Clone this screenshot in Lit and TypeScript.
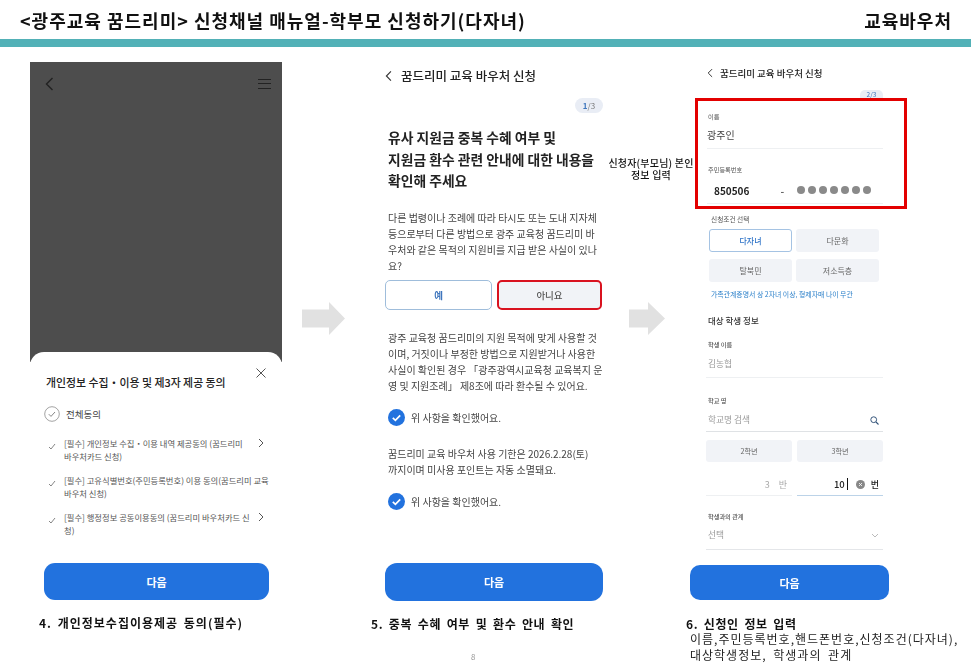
import { LitElement, html, css } from "lit";
import { customElement } from "lit/decorators.js";

const back = (w: number, h: number) => html`<svg class="ico" width=${w} height=${h} viewBox="0 0 10 16"><path d="M8.5 1.5 2 8l6.5 6.5" fill="none" stroke="#333" stroke-width="1.6"/></svg>`;
const right = html`<svg class="ico chev" width="6" height="10" viewBox="0 0 6 10"><path d="M1 1l4 4-4 4" fill="none" stroke="#555" stroke-width="1"/></svg>`;
const tick = html`<svg class="ico tick" width="8" height="7" viewBox="0 0 8 7"><path d="M1 4l2 2 4-5" fill="none" stroke="#777" stroke-width=".9"/></svg>`;
const blueCheck = html`<svg class="ico" width="17" height="17" viewBox="0 0 17 17"><circle cx="8.5" cy="8.5" r="8.5" fill="#2272de"/><path d="M4.8 8.8l2.6 2.5 4.8-5" fill="none" stroke="#fff" stroke-width="1.7"/></svg>`;
const arrow = (shaftEnd: number, w: number) => html`<svg class="arrow" width=${w} height="33" viewBox="0 0 ${w} 33"><path d="M0 7.500H${shaftEnd}V0L${w} 16.500 ${shaftEnd} 33V25.500H0Z" fill="#e1e1e1"/></svg>`;

@customElement("app-root")
export class AppRoot extends LitElement {
  static styles = css`
    :host { display: block; width: 971px; height: 670px; overflow: hidden; background: #fff; color: #222;
      font-family: "Noto Sans CJK KR", "Noto Sans", sans-serif; }
    * { box-sizing: border-box; }
    .ico { display: block; flex: none; }
    .head { height: 39px; padding: 0 19px 0 20px; display: flex; justify-content: space-between; align-items: center;
      font-size: 18px; letter-spacing: 1px; font-weight: 700; color: #111; line-height: 24px; white-space: nowrap; filter: blur(.3px); }
    .band { height: 8px; background: #52b1b7; }
    .slide { position: relative; display: flex; align-items: flex-start; padding: 15px 0 0 30px; filter: blur(.35px); }
    .col { display: flex; flex-direction: column; flex: none; }
    .c1 { width: 252px; }
    .c2 { width: 235px; margin-left: 26px; padding-left: 14px; }
    .c3 { width: 285px; margin-left: 21px; }
    .arrow { display: block; flex: none; margin-top: 240px; }
    .a1 { margin-left: 20px; }
    .a2 { margin-left: 23px; }
    .cap { font-size: 12px; font-weight: 700; line-height: 18px; color: #111; white-space: nowrap; letter-spacing: .55px; word-spacing: 2.5px; }
    .btn { background: #2272de; color: #fff; font-size: 11px; font-weight: 700; display: flex; align-items: center; justify-content: center; }

    /* panel 1 */
    .dim { height: 300px; background: #4d4d4d; display: flex; justify-content: space-between; align-items: flex-start; padding: 15px 11px 0 15px; margin-bottom: -10px; }
    .burger { width: 13px; height: 10px; margin-top: 2px; border-top: 1.500px solid #222; border-bottom: 1.500px solid #222; position: relative; }
    .burger::after { content: ""; position: absolute; left: 0; right: 0; top: 2.500px; height: 1.500px; background: #222; }
    .sheet { position: relative; height: 248px; background: #fff; border-radius: 14px 14px 0 0; padding: 22px 0 0 14px; }
    .s-title { font-size: 10.900px; font-weight: 500; line-height: 16px; margin-left: 2px; white-space: nowrap; color: #222; }
    .close { position: absolute; top: 16px; left: 226px; }
    .all { display: flex; align-items: center; gap: 6px; margin-top: 16px; font-size: 9.500px; color: #444; line-height: 16px; }
    .ring { width: 16px; height: 16px; }
    .items { margin-top: 15px; display: flex; flex-direction: column; gap: 11px; }
    .item { position: relative; font-size: 8.300px; line-height: 13px; color: #555; padding-left: 20px; width: 212px; height: 26px; }
    .item .tick { position: absolute; left: 4px; top: 6px; }
    .item .chev { position: absolute; left: 214px; top: 1px; }
    .t { display: block; white-space: nowrap; }
    .go1 { width: 225px; height: 37px; border-radius: 11px; margin: 26px 0 0 0; }
    .c1 .cap { margin: 14px 0 0 9px; letter-spacing: 1px; word-spacing: 2px; }

    /* panel 2 */
    .bar { display: flex; align-items: center; gap: 9px; font-size: 12.500px; font-weight: 500; line-height: 18px; height: 27px; margin-top: 0; }
    .badge { background: #e9edf5; color: #777; border-radius: 8px; font-size: 8px; line-height: 15px; width: 28px; text-align: center; margin: 9px 0 0 auto; }
    .badge b { color: #3f76bd; }
    .p2 { width: 218px; }
    .h { font-size: 13.800px; font-weight: 700; line-height: 21.500px; margin: 14px 0 0 3px; color: #222; white-space: nowrap; }
    .para { font-size: 10px; line-height: 16px; color: #444; margin: 18px 0 0 3px; white-space: nowrap; }
    .yn { display: flex; gap: 5px; margin-top: 6.500px; }
    .yes, .no { display: flex; align-items: center; justify-content: center; height: 30px; font-size: 9.500px; border-radius: 5px; font-weight: 500; }
    .yes { width: 107px; border: 1.500px solid #9fbddb; color: #3f76bd; background: #fff; font-weight: 700; }
    .no { width: 105px; border: 2px solid #d9121f; background: #f1f3f7; color: #555; }
    .ok { display: flex; align-items: center; gap: 6px; margin: 15px 0 0 3px; font-size: 10px; line-height: 17px; color: #444; }
    .mid { margin-top: 20px; }
    .last { margin-top: 20px; }
    .go2 { width: 218px; height: 38px; border-radius: 12px; margin-top: 53px; }
    .c2 .cap { margin: 14px 0 0 -14px; }
    .page { font-size: 8px; line-height: 12px; color: #999; margin: 18px 0 0 86px; }

    /* panel 3 */
    .c3 .bar { margin-left: 21px; font-size: 9.500px; height: 22px; gap: 7px; }
    .badge3 { margin: 6px 0 0 174px; width: 23px; height: 8px; background: #e9edf5; color: #3f76bd; font-size: 6.500px; line-height: 8px; text-align: center; border-radius: 5px 5px 0 0; }
    .redbox { margin: 0 0 0 9px; width: 212px; height: 111px; border: 3px solid #e30000; padding: 11px 21px 0 9px; background: #fff; }
    .lbl { font-size: 6.200px; line-height: 10px; color: #555; margin-left: 1px; white-space: nowrap; }
    .val { font-size: 10px; line-height: 16px; color: #444; margin-top: 5px; }
    .rule { height: 1px; background: #eef0f2; }
    .r1 { margin-top: 5px; }
    .l2 { margin-top: 16px; }
    .rrn { display: flex; align-items: center; height: 20px; margin: 5px 0 0 0; font-size: 10px; font-weight: 700; color: #222; padding-left: 7px; }
    .dash { margin-left: 31px; width: 5px; text-align: left; color: #666; }
    .dots { display: flex; gap: 3px; margin-left: 12px; }
    .dots i { width: 8px; height: 8px; border-radius: 50%; background: #8a8a8a; }
    .r2 { margin-top: 3px; }
    .sec { padding-left: 25px; }
    .cond { font-size: 6.700px; line-height: 10px; color: #555; margin: 5px 0 0 0; }
    .opts { display: grid; grid-template-columns: 83px 83px; gap: 7px 4px; margin: 5px 0 0 -2px; }
    .opt { height: 23px; display: flex; align-items: center; justify-content: center; border-radius: 3px; background: #f1f3f7; color: #666; font-size: 8px; }
    .opt.on { background: #fff; border: 1px solid #a5c3e3; color: #2f74c8; font-weight: 500; }
    .note { font-size: 6.900px; line-height: 10px; color: #2a7fc9; margin-top: 7px; white-space: nowrap; }
    .wrap { padding-left: 20px; width: 197px; }
    .sub { font-size: 8.500px; font-weight: 500; line-height: 12px; margin: 15px 0 0 2px; color: #333; }
    .wrap .lbl { margin-left: 2px; font-weight: 500; }
    .ph { font-size: 8.700px; line-height: 14px; color: #999; margin: 7px 0 0 2px; display: flex; justify-content: space-between; align-items: center; padding-right: 4px; }
    .wrap .l-name { margin-top: 14px; }
    .wrap .l-school { margin-top: 18px; }
    .wrap .l-rel { margin-top: 16px; }
    .ph.tight { margin-top: 6px; }
    .wrap .r3 { margin-top: 6px; }
    .wrap .r4 { margin-top: 4px; background: #dfe2e5; }
    .wrap .r5 { margin-top: 7px; background: #e4e6e9; }
    .grades { display: grid; grid-template-columns: 86px 86px; gap: 5px; margin-top: 8px; }
    .grades div { height: 22px; background: #f1f3f7; border-radius: 3px; display: flex; align-items: center; justify-content: center; font-size: 7.200px; color: #666; }
    .nums { display: grid; grid-template-columns: 86px 86px; gap: 5px; margin-top: 11px; }
    .num { height: 23px; display: flex; align-items: center; justify-content: flex-end; font-size: 9px; border-bottom: 1px solid #eef0f2; color: #aaa; gap: 9px; padding-right: 5px; }
    .num.act { border-bottom-color: #bcd3e8; color: #222; gap: 0; padding-right: 4px; font-weight: 500; }
    .num.act .n { font-size: 9.500px; }
    .caret { width: 1px; height: 12px; background: #111; margin: 0 8px 0 2px; }
    .x { width: 9px; height: 9px; margin-right: 6px; }
    .go3 { width: 199px; height: 35px; margin: 15px 0 0 4px; border-radius: 10px; }
    .c3 .cap { margin-top: 16px; line-height: 15px; }
    .desc { font-size: 12px; line-height: 16px; margin-left: 4px; color: #222; white-space: nowrap; letter-spacing: 1px; word-spacing: 3px; }

    .note-box { position: absolute; left: 600px; top: 110px; width: 102px; text-align: center; font-size: 10px; letter-spacing: .2px; font-weight: 500; line-height: 12px; color: #111; white-space: nowrap; }
  `;

  render() {
    return html`
      <div class="head"><span>&lt;광주교육 꿈드리미&gt; 신청채널 매뉴얼-학부모 신청하기(다자녀)</span><span>교육바우처</span></div>
      <div class="band"></div>
      <div class="slide">
        <div class="col c1">
          <div class="dim">
            <svg class="ico" width="9" height="14" viewBox="0 0 9 14"><path d="M7.500 1 1.500 7l6 6" fill="none" stroke="#222" stroke-width="1.400"/></svg>
            <div class="burger"></div>
          </div>
          <div class="sheet">
            <div class="s-title">개인정보 수집・이용 및 제3자 제공 동의</div>
            <svg class="ico close" width="10" height="10" viewBox="0 0 10 10"><path d="M.5.5l9 9m0-9l-9 9" stroke="#555" stroke-width="1" fill="none"/></svg>
            <div class="all">
              <svg class="ico ring" viewBox="0 0 16 16"><circle cx="8" cy="8" r="7.300" fill="none" stroke="#999" stroke-width=".9"/><path d="M4.800 8.200l2.200 2.200 4-4.400" fill="none" stroke="#777" stroke-width=".9"/></svg>
              전체동의
            </div>
            <div class="items">
              <div class="item">${tick}<span class="t">[필수] 개인정보 수집・이용 내역 제공동의 (꿈드리미</span><span class="t">바우처카드 신청)</span>${right}</div>
              <div class="item">${tick}<span class="t">[필수] 고유식별번호(주민등록번호) 이용 동의(꿈드리미 교육</span><span class="t">바우처 신청)</span></div>
              <div class="item">${tick}<span class="t">[필수] 행정정보 공동이용동의 (꿈드리미 바우처카드 신</span><span class="t">청)</span>${right}</div>
            </div>
            <div class="btn go1">다음</div>
          </div>
          <div class="cap">4. 개인정보수집이용제공 동의(필수)</div>
        </div>
        <div class="a1">${arrow(27, 43)}</div>
        <div class="col c2">
          <div class="p2">
            <div class="bar">${back(7, 12)}<span>꿈드리미 교육 바우처 신청</span></div>
            <div class="badge"><b>1</b>/3</div>
            <div class="h">유사 지원금 중복 수혜 여부 및<br />지원금 환수 관련 안내에 대한 내용을<br />확인해 주세요</div>
            <div class="para">다른 법령이나 조례에 따라 타시도 또는 도내 지자체<br />등으로부터 다른 방법으로 광주 교육청 꿈드리미 바<br />우처와 같은 목적의 지원비를 지급 받은 사실이 있나<br />요?</div>
            <div class="yn"><div class="yes">예</div><div class="no">아니요</div></div>
            <div class="para mid">광주 교육청 꿈드리미의 지원 목적에 맞게 사용할 것<br />이며, 거짓이나 부정한 방법으로 지원받거나 사용한<br />사실이 확인된 경우 「광주광역시교육청 교육복지 운<br />영 및 지원조례」 제8조에 따라 환수될 수 있어요.</div>
            <div class="ok">${blueCheck}위 사항을 확인했어요.</div>
            <div class="para last">꿈드리미 교육 바우처 사용 기한은 2026.2.28(토)<br />까지이며 미사용 포인트는 자동 소멸돼요.</div>
            <div class="ok">${blueCheck}위 사항을 확인했어요.</div>
            <div class="btn go2">다음</div>
          </div>
          <div class="cap">5. 중복 수혜 여부 및 환수 안내 확인</div>
          <div class="page">8</div>
        </div>
        <div class="a2">${arrow(19, 36)}</div>
        <div class="col c3">
          <div class="bar">${back(6, 10)}<span>꿈드리미 교육 바우처 신청</span></div>
          <div class="badge3">2/3</div>
          <div class="redbox">
            <div class="lbl">이름</div>
            <div class="val">광주인</div>
            <div class="rule r1"></div>
            <div class="lbl l2">주민등록번호</div>
            <div class="rrn">850506<span class="dash">-</span><span class="dots"><i></i><i></i><i></i><i></i><i></i><i></i><i></i></span></div>
            <div class="rule r2"></div>
          </div>
          <div class="sec">
            <div class="cond">신청조건 선택</div>
            <div class="opts"><div class="opt on">다자녀</div><div class="opt">다문화</div><div class="opt">탈북민</div><div class="opt">저소득층</div></div>
            <div class="note">가족관계증명서 상 2자녀 이상, 형제자매 나이 무관</div>
          </div>
          <div class="wrap">
            <div class="sub">대상 학생 정보</div>
            <div class="lbl l-name">학생 이름</div>
            <div class="ph">김농협</div>
            <div class="rule r3"></div>
            <div class="lbl l-school">학교 명</div>
            <div class="ph">학교명 검색<svg class="ico" width="9" height="9" viewBox="0 0 9 9"><circle cx="3.700" cy="3.700" r="2.900" fill="none" stroke="#35557a" stroke-width="1"/><path d="M6 6l2.500 2.500" stroke="#35557a" stroke-width="1.100"/></svg></div>
            <div class="rule r4"></div>
            <div class="grades"><div>2학년</div><div>3학년</div></div>
            <div class="nums">
              <div class="num">3<span>반</span></div>
              <div class="num act"><span class="n">10</span><span class="caret"></span><svg class="ico x" viewBox="0 0 9 9"><circle cx="4.500" cy="4.500" r="4.500" fill="#888"/><path d="M3 3l3 3m0-3L3 6" stroke="#fff" stroke-width=".8"/></svg>번</div>
            </div>
            <div class="lbl l-rel">학생과의 관계</div>
            <div class="ph tight">선택<svg class="ico" width="8" height="5" viewBox="0 0 8 5"><path d="M1 1l3 3 3-3" fill="none" stroke="#aaa" stroke-width=".8"/></svg></div>
            <div class="rule r5"></div>
          </div>
          <div class="btn go3">다음</div>
          <div class="cap">6. 신청인 정보 입력</div>
          <div class="desc">이름,주민등록번호,핸드폰번호,신청조건(다자녀),<br />대상학생정보, 학생과의 관계</div>
        </div>
        <div class="note-box">신청자(부모님) 본인<br />정보 입력</div>
      </div>
    `;
  }
}
